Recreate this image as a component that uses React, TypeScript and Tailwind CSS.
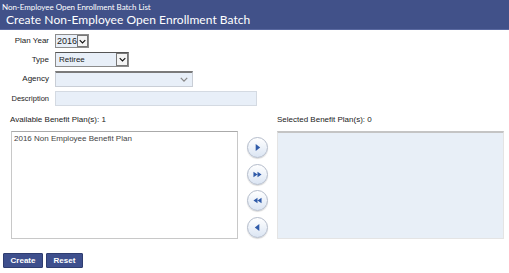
import React from 'react';

const Chevron: React.FC<{ className?: string }> = ({ className }) => (
  <svg viewBox="0 0 10 6" className={className} fill="none" stroke="currentColor" strokeWidth="1.6">
    <path d="M1 1 L5 5 L9 1" />
  </svg>
);

const MoveButton: React.FC<{ kind: 'one' | 'all' | 'allBack' | 'oneBack' }> = ({ kind }) => (
  <button className="w-[21px] h-[21px] rounded-full border border-[#b4bccb] bg-gradient-to-b from-white to-[#dbe5f3] flex items-center justify-center shadow-[0_1px_1px_rgba(0,0,0,0.15)]">
    <svg viewBox="0 0 10 10" className="w-[9px] h-[9px]" fill="#2f5aa8">
      {kind === 'one' && <path d="M3 1 L8 5 L3 9 Z" />}
      {kind === 'oneBack' && <path d="M7 1 L2 5 L7 9 Z" />}
      {kind === 'all' && <path d="M0.5 2 L5 5 L0.5 8 Z M5 2 L9.5 5 L5 8 Z" />}
      {kind === 'allBack' && <path d="M9.5 2 L5 5 L9.5 8 Z M5 2 L0.5 5 L5 8 Z" />}
    </svg>
  </button>
);

export default function App() {
  return (
    <div className="w-[509px] h-[273px] bg-white font-['Liberation_Sans',Arial,sans-serif] text-[#222]">
      <div className="h-[30px] bg-[#415189] border-b border-[#5a69a0] text-white font-['Lato',sans-serif] px-[2px]">
        <div className="text-[8px] leading-[10px] pt-[2px] tracking-[-0.05px]">Non-Employee Open Enrollment Batch List</div>
        <div className="text-[12px] leading-[16px] pl-[4px] tracking-[0.05px]">Create Non-Employee Open Enrollment Batch</div>
      </div>

      <div className="grid grid-cols-[49px_1fr] gap-x-[6px] gap-y-[4px] mt-[4px] text-[8px] items-center">
        <div className="text-right">Plan Year</div>
        <div className="flex">
          <div className="h-[14px] w-[34px] flex border border-[#8c8c8c] bg-[#e8eff8]">
            <span className="flex-1 pl-[1px] text-[9px] leading-[12px]">2016</span>
            <span className="w-[12px] border border-[#777] bg-[#f4f4f4] flex items-center justify-center">
              <Chevron className="w-[7px] h-[5px] text-[#111]" />
            </span>
          </div>
        </div>

        <div className="text-right">Type</div>
        <div className="flex">
          <div className="h-[15px] w-[74px] flex border border-[#8c8c8c] border-t-[#555] bg-[#e8eff8]">
            <span className="flex-1 pl-[3px] text-[8px] leading-[13px]">Retiree</span>
            <span className="w-[12px] border border-[#777] bg-[#f4f4f4] flex items-center justify-center">
              <Chevron className="w-[7px] h-[5px] text-[#111]" />
            </span>
          </div>
        </div>

        <div className="text-right">Agency</div>
        <div className="flex">
          <div className="h-[16px] w-[138px] flex items-center justify-end border border-[#c9ced6] border-t-[#7a7a7a] border-t-2 bg-[#e8eff8] pr-[4px]">
            <Chevron className="w-[8px] h-[5px] text-[#888]" />
          </div>
        </div>

        <div className="text-right text-[7.5px]">Description</div>
        <div className="flex">
          <div className="h-[15px] w-[202px] border border-[#d4dae2] bg-[#e8eff8]" />
        </div>
      </div>

      <div className="flex mt-[9px] text-[8px]">
        <div className="pl-[10px] w-[277px]">
          <div className="leading-[10px]">Available Benefit Plan(s): 1</div>
          <div className="flex items-start mt-[6px]">
            <div className="w-[227px] h-[108px] ml-[1px] border border-[#c8c8c8] border-t-[#aaa] bg-white text-[8px] text-[#444] pl-[2px] pt-[1px]">
              2016 Non Employee Benefit Plan
            </div>
            <div className="flex flex-col gap-[5.5px] ml-[9px] mt-[6px]">
              <MoveButton kind="one" />
              <MoveButton kind="all" />
              <MoveButton kind="allBack" />
              <MoveButton kind="oneBack" />
            </div>
          </div>
        </div>
        <div>
          <div className="leading-[10px]">Selected Benefit Plan(s): 0</div>
          <div className="w-[227px] h-[108px] mt-[6px] border border-[#e4e4e4] border-t-2 border-t-[#c4c4c4] bg-[#e8eff7]" />
        </div>
      </div>

      <div className="flex gap-[3px] pl-[3px] mt-[14px]">
        <button className="w-[40px] h-[15px] bg-[#3e4f8d] border border-[#2f3d70] rounded-[1px] text-white font-bold text-[8px]">Create</button>
        <button className="w-[37px] h-[15px] bg-[#3e4f8d] border border-[#2f3d70] rounded-[1px] text-white font-bold text-[8px]">Reset</button>
      </div>
    </div>
  );
}
